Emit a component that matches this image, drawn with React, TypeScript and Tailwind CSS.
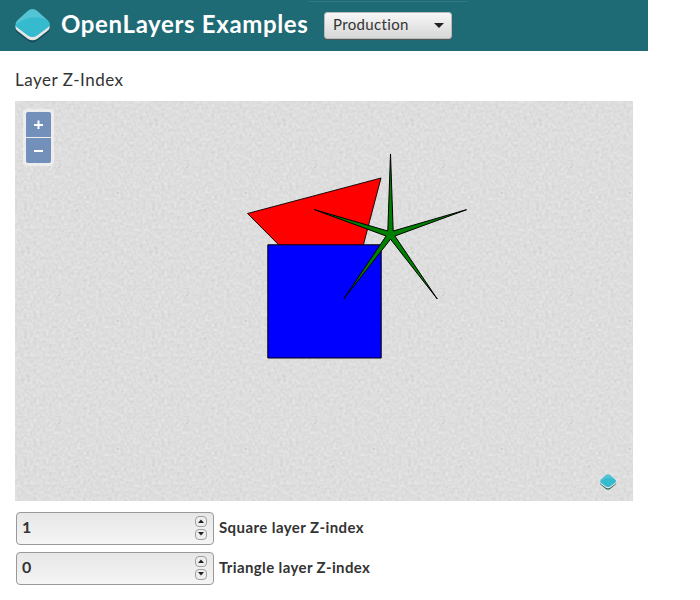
import React from 'react';

function Logo({ className }: { className: string }) {
  return (
    <svg viewBox="0 0 36 36" className={className} aria-hidden="true">
      <path d="M.8 20 V22.5 Q1 24 3 25.5 L13 33 Q18 37 23 33 L33 25.5 Q35 24 35.2 22.5 V20Z" fill="#124e59" />
      <path d="M.5 17.5 V19.8 Q.5 21.5 3 23.5 L13 31 Q18 34.5 23 31 L33 23.5 Q35.5 21.5 35.5 19.8 V17.5Z" fill="#e5e5e5" />
      <path d="M13 2.5 Q18 -1.5 23 2.5 L33.5 12 Q37.5 16.5 33.5 19.5 L23 27.5 Q18 31 13 27.5 L2.5 19.5 Q-1.5 16.5 2.5 12Z" fill="#54c4d5" />
      <path d="M.3 17.5 Q9 8.8 22 9 Q29 9 34.5 13 Q37.5 16.5 33.5 19.5 L23 27.5 Q18 31 13 27.5 L2.5 19.5Z" fill="#35bace" />
    </svg>
  );
}

function ZoomButton({ label, shape }: { label: string; shape: string }) {
  return (
    <button aria-label={label} className={`flex h-[25px] w-[25px] items-center justify-center bg-[#7390bb] ${shape}`}>
      <svg width="9" height="9" viewBox="0 0 9 9" stroke="white" strokeWidth="2">
        <path d={label === 'Zoom in' ? 'M0 5H9M4.5 .5V9' : 'M0 5H9'} />
      </svg>
    </button>
  );
}

function Stepper() {
  return (
    <span className="flex flex-col gap-[2px] pb-[2px]">
      {['M2 6L5 2.5L8 6Z', 'M2 2L5 5.5L8 2Z'].map((d) => (
        <button key={d} className="flex h-[11px] w-3 items-center justify-center rounded-[4px] border border-[#a0a0a0] bg-[#eee]">
          <svg width="10" height="8" viewBox="0 0 10 8" className="shrink-0">
            <path d={d} fill="#222" />
          </svg>
        </button>
      ))}
    </span>
  );
}

function IndexField({ value, label, labelClass }: { value: string; label: string; labelClass: string }) {
  return (
    <label className="flex h-[33px] items-center gap-[5px] font-bold text-[#333]">
      <span className="flex h-[33px] w-[198px] items-center justify-between rounded-[4px] border border-[#999] bg-linear-to-b from-[#e7e7e7] to-[#f5f5f5] pr-[6px] pl-[5px] text-[16px]">
        <span className="pb-[3px]">{value}</span>
        <Stepper />
      </span>
      <span className={`pb-[2px] whitespace-nowrap text-[15px] ${labelClass}`}>{label}</span>
    </label>
  );
}

function MapView() {
  return (
    <div className="relative h-[400px] w-[618px] overflow-hidden bg-[#dcdcdc]">
      <svg width="618" height="400" viewBox="15 101 618 400" className="block">
        <defs>
          <filter id="paper" x="0" y="0" width="100%" height="100%" colorInterpolationFilters="sRGB">
            <feTurbulence type="fractalNoise" baseFrequency=".32" numOctaves="3" seed="8" stitchTiles="stitch" />
            <feColorMatrix values=".08 .06 0 0 .798 .08 .06 0 0 .798 .08 .06 0 0 .798 0 0 0 0 1" />
          </filter>
          <pattern id="paperTile" x="15" y="101" width="128" height="128" patternUnits="userSpaceOnUse">
            <rect width="128" height="128" filter="url(#paper)" />
            <path d="M12 18l1 2M43 67l2-1M79 32l1 1M102 91l1 2M61 109l2 1M117 45l1-1" stroke="#c2c2c2" />
          </pattern>
        </defs>
        <rect x="15" y="101" width="618" height="400" fill="url(#paperTile)" />
        <path d="M247.5 213.5L381 178L345.7 312Z" fill="red" stroke="black" strokeWidth=".9" />
        <path d="M267.8 244.8H381.2V358H267.8Z" fill="blue" stroke="black" />
        <path d="M390.5 154L393.2 231L466.5 209.7L394.9 236L437.3 299L390.5 239.2L343.7 299L386.1 236L314.5 209.7L387.8 231Z" fill="green" stroke="black" />
      </svg>
      <div className="absolute top-2 left-2 flex flex-col gap-px rounded-[4px] bg-white/45 p-[3px]">
        <ZoomButton label="Zoom in" shape="rounded-t-[2px]" />
        <ZoomButton label="Zoom out" shape="rounded-b-[2px]" />
      </div>
      <Logo className="absolute right-[17px] bottom-[11px] h-4 w-4" />
    </div>
  );
}

export default function App() {
  return (
    <div className="h-[600px] w-[700px] overflow-hidden bg-white font-['Lato','Noto_Sans',sans-serif] text-[#333] [font-variant-ligatures:none]">
      <header className="relative flex h-[51px] w-[648px] items-center bg-[#1f6b75] pl-[15px]">
        <div className="absolute top-[1px] left-[308px] h-px w-40 bg-[#327781]" />
        <Logo className="h-9 w-[35px]" />
        <h1 className="ml-[11px] w-[263px] pb-[3px] whitespace-nowrap text-[24px] leading-none font-bold tracking-[0.65px] text-white">OpenLayers Examples</h1>
        <button className="flex h-[27px] w-32 items-center justify-between rounded-[3px] border border-[#bbb] bg-linear-to-b from-[#f7f7f7] to-[#d7d7d7] pr-[7px] pl-2 text-[15px] shadow-[0_1px_1px_#555]">
          <span className="pb-[2px] tracking-[0.35px]">Production</span>
          <svg width="10" height="6" viewBox="0 0 10 6"><path d="M0 0H10L5 5Z" fill="#222" /></svg>
        </button>
      </header>
      <main className="px-[15px]">
        <h4 className="flex h-[50px] items-center pt-[6px] text-[17px] leading-none tracking-[0.5px]">Layer Z-Index</h4>
        <MapView />
        <form className="ml-px flex flex-col gap-[7px] pt-[11px]">
          <IndexField value="1" label="Square layer Z-index" labelClass="tracking-[0.42px]" />
          <IndexField value="0" label="Triangle layer Z-index" labelClass="tracking-[0.37px]" />
        </form>
      </main>
    </div>
  );
}
